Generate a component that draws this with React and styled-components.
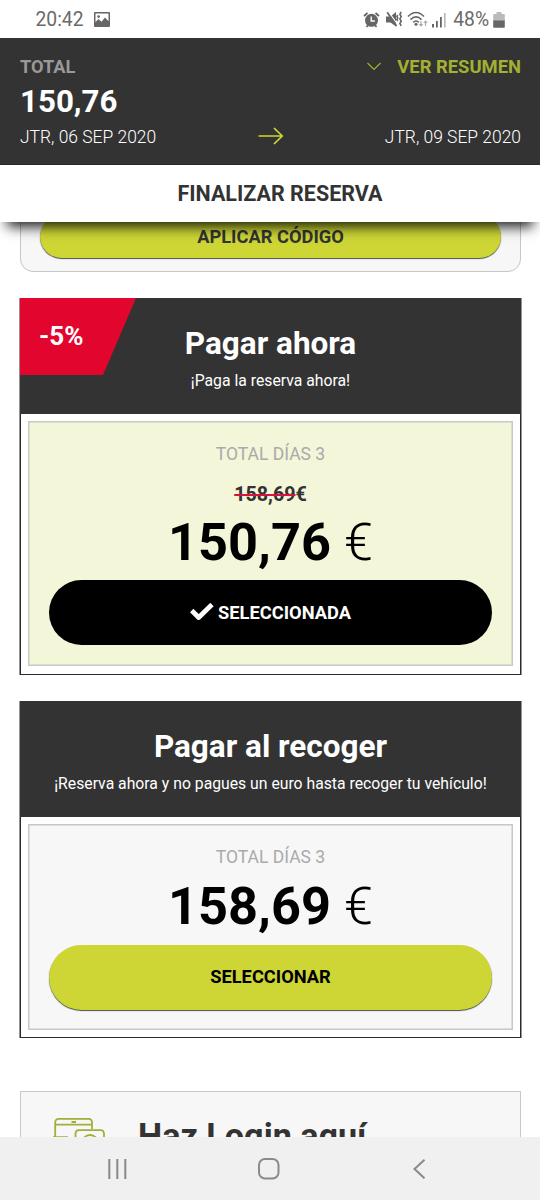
import React from "react";
import styled, { createGlobalStyle } from "styled-components";

const GlobalStyle = createGlobalStyle`
  * { box-sizing: border-box; }
  body { margin: 0; background: #fff; font-family: Roboto, "Liberation Sans", sans-serif; color: #333; }
`;

const Screen = styled.div`
  display: flex;
  flex-direction: column;
  width: 540px;
  height: 1200px;
  overflow: hidden;
  background: #fff;
`;

const StatusBar = styled.div`
  display: flex;
  align-items: center;
  flex: none;
  height: 38px;
  padding: 2px 35px 0 35.5px;
  color: #6a6a6a;
  font-size: 19.3px;
  line-height: 36px;
`;

const StatusIcons = styled.div`
  display: flex;
  align-items: center;
  margin-left: auto;
`;

const StatusText = styled.span`
  margin-left: 7px;
`;

const StatusIcon = styled.svg`
  display: block;
  flex: none;
  margin: -1px 0 0 ${(p) => p.$gap || 0}px;
`;

const Summary = styled.header`
  flex: none;
  height: 127px;
  padding: 16px 19px 0 20px;
  background: #333;
  color: #fff;
  border-bottom: 1px solid #292929;
`;

const SummaryRow = styled.div`
  display: flex;
  align-items: center;
  justify-content: space-between;
  height: ${(p) => p.$height}px;
`;

const Label = styled.span`
  font-size: 18.2px;
  font-weight: 700;
  color: #999;
`;

const SummaryLink = styled.span`
  display: flex;
  align-items: center;
  gap: 15px;
  font-size: 18.4px;
  font-weight: 700;
  color: #a3b031;
`;

const Amount = styled.span`
  font-size: 31.3px;
  font-weight: 700;
`;

const DateText = styled.span`
  font-size: 17.45px;
  font-weight: 300;
`;

const Finish = styled.div`
  position: relative;
  z-index: 1;
  flex: none;
  height: 57px;
  padding-left: 20px;
  background: #fff;
  text-align: center;
  font-size: 21.5px;
  line-height: 58px;
  font-weight: 700;
  box-shadow: 0 12px 12px -7px rgba(0, 0, 0, 0.85);
`;

const Content = styled.main`
  flex: 1;
  min-height: 0;
  overflow: hidden;
  padding: 0 19px 0 20px;
`;

const Coupon = styled.section`
  height: 76px;
  margin-top: -26px;
  padding: 18px 19px 0;
  background: #f7f7f7;
  border: 1px solid #c4c6c8;
  border-radius: 0 0 13px 13px;
`;

const Button = styled.button`
  display: flex;
  align-items: center;
  justify-content: center;
  gap: 4px;
  width: 100%;
  height: ${(p) => p.$height}px;
  padding: 0 0 ${(p) => p.$lift || 0}px;
  border: 0;
  border-radius: 33px;
  background: ${(p) => (p.$selected ? "#000" : "#cdd635")};
  color: ${(p) => p.$color};
  box-shadow: ${(p) => (p.$selected ? "none" : "0 1px 1px #46514a")};
  font: 700 18.3px Roboto, "Liberation Sans", sans-serif;
`;

const Card = styled.section`
  margin-top: ${(p) => p.$top}px;
  padding-bottom: ${(p) => p.$bottom}px;
  border: solid #2b2b2b;
  border-width: 0 1px 1px;
  background: #fff;
  box-shadow: -0.5px 0 0 #2b2b2b, 0.5px 0 0 #2b2b2b;
`;

const CardHeader = styled.div`
  position: relative;
  height: 116px;
  margin: 0 -1px;
  padding-top: 25px;
  background: #333;
  color: #fff;
  text-align: center;
`;

const Discount = styled.div`
  position: absolute;
  top: 0;
  left: 0;
  width: 116px;
  height: 77px;
  padding-left: 19px;
  background: #e2062f;
  clip-path: polygon(0 0, 100% 0, 83px 100%, 0 100%);
  text-align: left;
  font-size: 26px;
  line-height: 77px;
  font-weight: 700;
`;

const CardTitle = styled.h2`
  margin: 0;
  font-size: 31.5px;
  line-height: 41px;
  font-weight: 700;
`;

const CardText = styled.p`
  margin: 3px 0 0;
  font-size: 15.75px;
  line-height: 28px;
`;

const Offer = styled.div`
  display: flex;
  flex-direction: column;
  align-items: center;
  margin: 7px 7px 0;
  padding: 19px 20px ${(p) => p.$bottom}px;
  border: 1px solid #c6c9c6;
  background: ${(p) => (p.$active ? "#f3f6d8" : "#f7f7f7")};
  box-shadow: inset 0 0 0 0.5px #c6c9c6;
`;

const Days = styled.div`
  font-size: 17.5px;
  line-height: 26px;
  color: #aaa;
`;

const OldPrice = styled.div`
  margin-top: 15px;
  font-size: 19.7px;
  line-height: 26px;
  font-weight: 700;
  color: #333;
`;

const Struck = styled.s`
  text-decoration: line-through #d4143c 2px;
`;

const Price = styled.div`
  height: ${(p) => p.$height}px;
  font-size: 52.3px;
  line-height: ${(p) => p.$line}px;
  font-weight: 700;
  color: #000;
`;

const Currency = styled.span`
  font-weight: 300;
`;

const LoginPanel = styled.section`
  display: flex;
  height: 120px;
  margin-top: 53px;
  padding: 26px 0 0 32px;
  border: 1px solid #c6c9c6;
  background: #f7f7f7;
`;

const LoginTitle = styled.h2`
  margin: -4px 0 0 31px;
  font-size: 34.2px;
  line-height: 44px;
  font-weight: 700;
`;

const NavBar = styled.nav`
  display: flex;
  align-items: center;
  justify-content: space-between;
  flex: none;
  height: 63px;
  padding: 0 114px 0 107px;
  background: #f0f0f0;
`;

function Devices() {
  return (
    <svg width="54" height="50" viewBox="0 0 54 50" fill="none" stroke="#a3ae3a" strokeWidth="1.8">
      <path d="M2.200 20V4.500Q2.200.9 5.800.9H35.500Q39 .9 39 4.500V11M2.200 6.600H39M-1 19.200H15" />
      <path d="M18.500 4H23" strokeWidth="2" />
      <path d="M22.500 46V16Q22.500 12.200 26 12.200H47.500Q51 12.200 51 16V46" />
      <circle cx="37" cy="25" r="8" />
    </svg>
  );
}

export default function App() {
  return (
    <>
      <GlobalStyle />
      <Screen>
        <StatusBar>
          20:42
          <StatusIcon $gap={10} width="16" height="15" viewBox="0 0 16 15">
            <path fillRule="evenodd" fill="#666" d="M1 0h14q1 0 1 1v13q0 1-1 1H1q-1 0-1-1V1q0-1 1-1zM1.500 1.500V10l3-3 3 2.700L11 5.500l3.500 3.700V1.500zM3.200 4.600a1.400 1.400 0 1 0 2.800 0a1.400 1.400 0 1 0-2.800 0z" />
          </StatusIcon>
          <StatusIcons>
            <StatusIcon width="17" height="16" viewBox="0 0 17 16" fill="none" stroke="#666">
              <circle cx="8.500" cy="8.300" r="6.500" fill="#666" stroke="none" />
              <path d="M1 4L4.500 1M16 4L12.500 1M3.500 15l1.500-2M13.500 15L12 13" strokeWidth="1.800" />
              <path d="M8.200 4.600v4.400h3.600" stroke="#fff" strokeWidth="1.400" />
            </StatusIcon>
            <StatusIcon $gap={6} width="17" height="17" viewBox="0 0 17 17" fill="none" stroke="#666">
              <path d="M0 5.500h4.500L10 1V15.500L4.500 11.500H0z" fill="#666" stroke="none" />
              <path d="M2.500 .5L11.500 13.500" stroke="#fff" strokeWidth="1.200" />
              <path d="M1.200 1.200L10.500 15" strokeWidth="1.700" />
              <path d="M11.700 4l-.8 1.500.8 1.500-.8 1.500.8 1.500M15.200 1l-1.300 2.300 1.300 2.300-1.300 2.300 1.300 2.300-1.300 2.300 1.300 2.300" strokeWidth="1.600" />
            </StatusIcon>
            <StatusIcon $gap={4} width="21" height="17" viewBox="0 0 21 17" fill="none" stroke="#666">
              <path d="M1 5.500q8-8 16 0M3.500 8.600q5.500-5.400 11 0M6.200 11.300q2.800-2.600 5.600 0" strokeWidth="1.600" />
              <circle cx="9" cy="13.300" r="1.500" fill="#666" stroke="none" />
              <path d="M14 10v5m-1.700-1.800L14 15l1.700-1.800M18.500 15v-5m-1.700 1.800L18.500 10l1.700 1.800" stroke="#aaa" strokeWidth="1.100" />
            </StatusIcon>
            <StatusIcon $gap={4} width="14" height="16" viewBox="0 0 14 16">
              <path d="M0 12h2v3.500H0zM4 9h1.800v6.500H4zM8 5h1.800v10.500H8z" fill="#666" />
              <path d="M12 1h1.700v14.500H12z" fill="#bbb" />
            </StatusIcon>
            <StatusText>48%</StatusText>
            <StatusIcon $gap={4} width="12" height="16" viewBox="0 0 12 16">
              <path d="M3.500 0h5v2H11q.8 0 .8.800V9H.2V2.800Q.2 2 1 2h2.500z" fill="#bbb" />
              <path d="M.2 8.500h11.600V15q0 .8-.8.800H1q-.8 0-.8-.8z" fill="#666" />
            </StatusIcon>
          </StatusIcons>
        </StatusBar>

        <Summary>
          <SummaryRow $height={24}>
            <Label>TOTAL</Label>
            <SummaryLink>
              <svg width="16" height="9" viewBox="0 0 16 9" fill="none" stroke="#a3b031" strokeWidth="1.200">
                <path d="M1.500 1L8 7.500 14.500 1" />
              </svg>
              VER RESUMEN
            </SummaryLink>
          </SummaryRow>
          <SummaryRow $height={47}>
            <Amount>150,76</Amount>
          </SummaryRow>
          <SummaryRow $height={23}>
            <DateText>JTR, 06 SEP 2020</DateText>
            <svg width="26" height="20" viewBox="0 0 26 20" fill="none" stroke="#cdd635" strokeWidth="1.700">
              <path d="M.5 9H24M16 1l8.200 8-8.200 8" />
            </svg>
            <DateText>JTR, 09 SEP 2020</DateText>
          </SummaryRow>
        </Summary>

        <Finish>FINALIZAR RESERVA</Finish>

        <Content>
          <Coupon>
            <Button $height={43} $color="#333">APLICAR CÓDIGO</Button>
          </Coupon>

          <Card $top={26} $bottom={8}>
            <CardHeader>
              <Discount>-5%</Discount>
              <CardTitle>Pagar ahora</CardTitle>
              <CardText>¡Paga la reserva ahora!</CardText>
            </CardHeader>
            <Offer $active $bottom={20}>
              <Days>TOTAL DÍAS 3</Days>
              <OldPrice><Struck>158,69</Struck>€</OldPrice>
              <Price $height={72} $line={68}>150,76 <Currency>€</Currency></Price>
              <Button $selected $height={65} $color="#fff">
                <svg width="24" height="19" viewBox="0 0 24 19" fill="none" stroke="#fff" strokeWidth="4.800" strokeLinejoin="round">
                  <path d="M1.700 7.500l7 7L22 1.500" />
                </svg>
                SELECCIONADA
              </Button>
            </Offer>
          </Card>

          <Card $top={26} $bottom={7}>
            <CardHeader>
              <CardTitle>Pagar al recoger</CardTitle>
              <CardText>¡Reserva ahora y no pagues un euro hasta recoger tu vehículo!</CardText>
            </CardHeader>
            <Offer $bottom={19}>
              <Days>TOTAL DÍAS 3</Days>
              <Price $height={75} $line={73}>158,69 <Currency>€</Currency></Price>
              <Button $height={65} $lift={2} $color="#000">SELECCIONAR</Button>
            </Offer>
          </Card>

          <LoginPanel>
            <Devices />
            <LoginTitle>Haz Login aquí</LoginTitle>
          </LoginPanel>
        </Content>

        <NavBar>
          <svg width="20" height="20" viewBox="0 0 20 20" stroke="#8a8a8a" strokeWidth="2">
            <path d="M2.300 0v20M10.300 0v20M18.300 0v20" />
          </svg>
          <svg width="24" height="22" viewBox="0 0 24 22" fill="none" stroke="#8a8a8a" strokeWidth="2">
            <rect x="1" y="1" width="19.500" height="19.500" rx="6" />
          </svg>
          <svg width="14" height="20" viewBox="0 0 14 20" fill="none" stroke="#8a8a8a" strokeWidth="2">
            <path d="M12.500 .7L2.500 10l10 9.300" />
          </svg>
        </NavBar>
      </Screen>
    </>
  );
}
